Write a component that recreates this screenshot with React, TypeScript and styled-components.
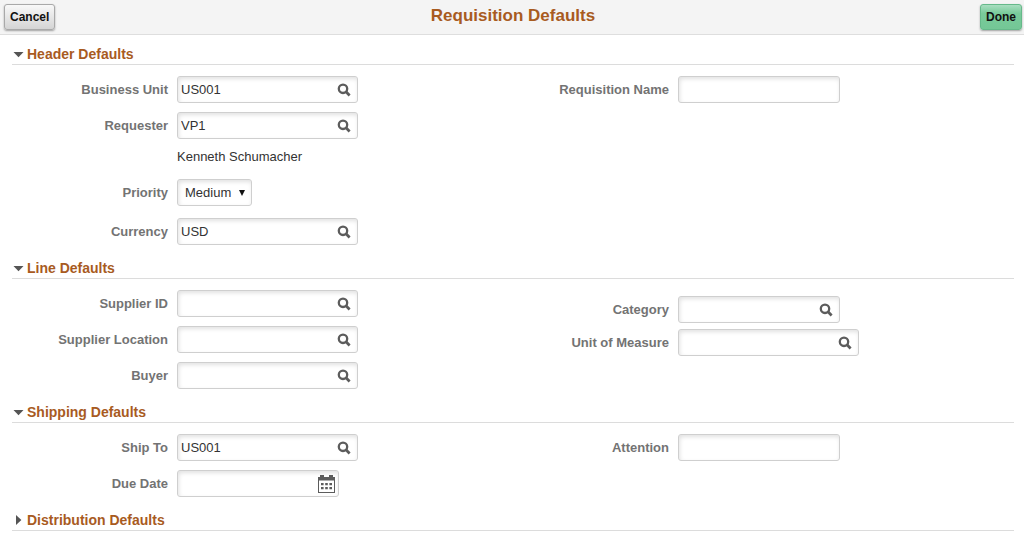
import React, { useState } from "react";
import styled, { createGlobalStyle, css } from "styled-components";

const GlobalStyle = createGlobalStyle`
  *, *::before, *::after { box-sizing: border-box; }
  body {
    margin: 0;
    background: #fff;
    color: #333;
    font-family: "Liberation Sans", Arial, Helvetica, sans-serif;
    font-size: 13px;
    line-height: 17px;
  }
`;

const TopBar = styled.header`
  display: grid;
  grid-template-columns: 1fr auto 1fr;
  align-items: center;
  min-height: 35px;
  padding: 0 2px 0 4px;
  background: #f4f4f4;
  border-bottom: 1px solid #dedede;
`;

const Title = styled.h1`
  margin: 0;
  padding-bottom: 2px;
  color: #a85b1f;
  font-size: 17px;
  line-height: 20px;
  font-weight: bold;
`;

const ActionButton = styled.button<{ $primary?: boolean }>`
  height: 26px;
  padding: 0 5px;
  border: 1px solid #a9a9a9;
  border-radius: 3px;
  background: linear-gradient(#f8f8f8, #d4d4d4);
  box-shadow: 0 1px 2px rgba(0, 0, 0, 0.35);
  color: #111;
  font: bold 12px "Liberation Sans", Arial, sans-serif;
  cursor: pointer;
  justify-self: start;
  ${(p) =>
    p.$primary &&
    css`
      justify-self: end;
      border-color: #66b98a;
      background: linear-gradient(#a9dec0, #78cb9a 35%, #74c796);
    `}
`;

const Page = styled.main`
  padding: 0 10px 8px 12px;
`;

const SectionHeading = styled.h2`
  display: flex;
  align-items: flex-end;
  margin: 0;
  height: 34px;
  border-bottom: 1px solid #dcdcdc;
  section:first-child > & {
    height: 30px;
  }
`;

const SectionToggle = styled.button`
  display: flex;
  align-items: center;
  gap: 3px;
  padding: 0 0 1px;
  border: 0;
  background: none;
  color: #a85b1f;
  font: bold 14px/18px "Liberation Sans", Arial, sans-serif;
  cursor: pointer;
`;

const ArrowIcon = styled.svg`
  width: 12px;
  height: 12px;
  fill: #555;
`;

const Columns = styled.div`
  display: grid;
  grid-template-columns: 1fr 1fr;
  padding-top: 11px;
`;

const Column = styled.div<{ $compact?: boolean }>`
  display: flex;
  flex-direction: column;
  gap: ${(p) => (p.$compact ? 6 : 9)}px;
  padding-top: ${(p) => (p.$compact ? 6 : 0)}px;
`;

const Row = styled.div<{ $spaced?: boolean }>`
  display: grid;
  grid-template-columns: 156px 1fr;
  column-gap: 9px;
  align-items: center;
  margin: ${(p) => (p.$spaced ? "5px 0 3px" : "0")};
`;

const Label = styled.label`
  padding-bottom: 1px;
  color: #737373;
  font-weight: bold;
  text-align: right;
`;

const ValueText = styled.span`
  grid-column: 2;
`;

const control = css`
  height: 27px;
  border: 1px solid #cfcfcf;
  border-radius: 3px;
  background: #fff;
  box-shadow: inset 1px 2px 4px rgba(0, 0, 0, 0.12);
`;

const FieldBox = styled.div<{ $wide?: boolean }>`
  ${control}
  display: flex;
  align-items: center;
  width: ${(p) => (p.$wide ? 181 : 162)}px;
`;

const TextInput = styled.input`
  flex: 1;
  min-width: 0;
  height: 100%;
  padding: 0 3px 1px;
  border: 0;
  outline: 0;
  background: none;
  color: #333;
  font: 13px "Liberation Sans", Arial, sans-serif;
`;

const IconButton = styled.button<{ $edge?: boolean }>`
  display: flex;
  padding: 0;
  margin-right: ${(p) => (p.$edge ? 3 : 6)}px;
  border: 0;
  background: none;
  cursor: pointer;
`;

const SelectBox = styled.div`
  ${control}
  display: grid;
  grid-template-columns: 1fr 12px;
  align-items: center;
  width: 75px;
`;

const Select = styled.select`
  grid-area: 1 / 1 / 2 / 3;
  height: 25px;
  padding: 0 16px 0 7px;
  border: 0;
  outline: 0;
  appearance: none;
  background: none;
  color: #333;
  font: 13px "Liberation Sans", Arial, sans-serif;
`;

const SelectArrow = styled.svg`
  grid-area: 1 / 2;
  width: 6px;
  height: 6px;
  fill: #111;
  pointer-events: none;
`;

const SearchIcon = () => (
  <svg width="14" height="14" viewBox="0 0 14 14" fill="none" stroke="#5c5c5c" aria-hidden="true">
    <circle cx="6" cy="5.8" r="4.2" strokeWidth="2.3" />
    <path d="M8.8 8.6l3.8 3.8" strokeWidth="2.8" />
  </svg>
);

const CalendarIcon = () => (
  <svg width="17" height="18" viewBox="0 0 17 18" aria-hidden="true">
    <path fill="#5c5c5c" d="M2 0h4v2h5V0h4v2h2v16H0V2h2zM1 5.6V17h15V5.6z" fillRule="evenodd" />
    <path
      fill="#5c5c5c"
      d="M3 8h2.6v2.2H3zM7.2 8h2.6v2.2H7.2zM11.4 8H14v2.2h-2.6zM3 12h2.6v2.2H3zM7.2 12h2.6v2.2H7.2zM11.4 12H14v2.2h-2.6z"
    />
  </svg>
);

type FieldProps = {
  id: string;
  label: string;
  value?: string;
  wide?: boolean;
  icon?: "search" | "calendar";
};

const Field = ({ id, label, value = "", wide, icon }: FieldProps) => (
  <Row>
    <Label htmlFor={id}>{label}</Label>
    <FieldBox $wide={wide}>
      <TextInput id={id} type="text" defaultValue={value} />
      {icon && (
        <IconButton type="button" $edge={icon === "calendar"} aria-label={icon === "search" ? `Look up ${label}` : `Choose ${label}`}>
          {icon === "search" ? <SearchIcon /> : <CalendarIcon />}
        </IconButton>
      )}
    </FieldBox>
  </Row>
);

type SectionProps = { title: string; defaultOpen?: boolean; children?: React.ReactNode };

const Section = ({ title, defaultOpen = true, children }: SectionProps) => {
  const [open, setOpen] = useState(defaultOpen);
  return (
    <section>
      <SectionHeading>
        <SectionToggle type="button" aria-expanded={open} onClick={() => setOpen(!open)}>
          <ArrowIcon viewBox="0 0 12 12" aria-hidden="true">
            <path d={open ? "M1.5 4h10L6.5 9.2z" : "M4 1v10l5.4-5z"} />
          </ArrowIcon>
          {title}
        </SectionToggle>
      </SectionHeading>
      {open && children && <Columns>{children}</Columns>}
    </section>
  );
};

export default function App() {
  return (
    <>
      <GlobalStyle />
      <TopBar>
        <ActionButton type="button">Cancel</ActionButton>
        <Title>Requisition Defaults</Title>
        <ActionButton type="button" $primary>
          Done
        </ActionButton>
      </TopBar>
      <Page>
        <Section title="Header Defaults">
          <Column>
            <Field id="business-unit" label="Business Unit" value="US001" wide icon="search" />
            <Field id="requester" label="Requester" value="VP1" wide icon="search" />
            <Row>
              <ValueText>Kenneth Schumacher</ValueText>
            </Row>
            <Row $spaced>
              <Label htmlFor="priority">Priority</Label>
              <SelectBox>
                <Select id="priority" defaultValue="Medium">
                  <option>High</option>
                  <option>Medium</option>
                  <option>Low</option>
                </Select>
                <SelectArrow viewBox="0 0 6 6" aria-hidden="true">
                  <path d="M0 0h6L3 6z" />
                </SelectArrow>
              </SelectBox>
            </Row>
            <Field id="currency" label="Currency" value="USD" wide icon="search" />
          </Column>
          <Column>
            <Field id="requisition-name" label="Requisition Name" />
          </Column>
        </Section>
        <Section title="Line Defaults">
          <Column>
            <Field id="supplier-id" label="Supplier ID" wide icon="search" />
            <Field id="supplier-location" label="Supplier Location" wide icon="search" />
            <Field id="buyer" label="Buyer" wide icon="search" />
          </Column>
          <Column $compact>
            <Field id="category" label="Category" icon="search" />
            <Field id="unit-of-measure" label="Unit of Measure" wide icon="search" />
          </Column>
        </Section>
        <Section title="Shipping Defaults">
          <Column>
            <Field id="ship-to" label="Ship To" value="US001" wide icon="search" />
            <Field id="due-date" label="Due Date" icon="calendar" />
          </Column>
          <Column>
            <Field id="attention" label="Attention" />
          </Column>
        </Section>
        <Section title="Distribution Defaults" defaultOpen={false} />
      </Page>
    </>
  );
}
